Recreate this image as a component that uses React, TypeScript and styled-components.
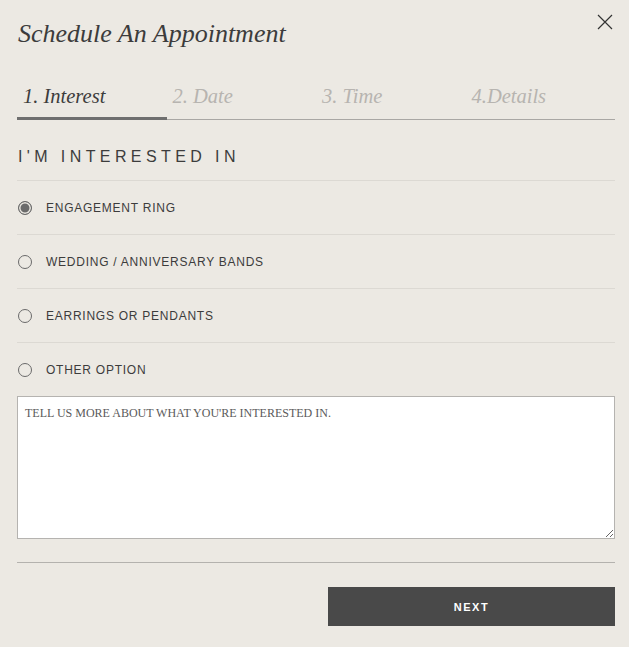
import React from "react";
import styled, { createGlobalStyle } from "styled-components";

const Global = createGlobalStyle`
  html, body { margin: 0; padding: 0; background: #ECE9E3; }
  * { box-sizing: border-box; }
`;

const Modal = styled.div`
  position: relative;
  width: 629px;
  height: 647px;
  background: #ECE9E3;
  padding: 0 14px 0 17px;
`;

const Title = styled.h1`
  margin: 0;
  padding-top: 17px;
  height: 76px;
  font-family: "Liberation Serif", serif;
  font-style: italic;
  font-weight: 400;
  font-size: 26px;
  line-height: 34px;
  color: #3c3c3c;
  padding-left: 1px;
`;

const Close = styled.button`
  position: absolute;
  top: 13px;
  right: 15px;
  width: 18px;
  height: 18px;
  padding: 0;
  border: 0;
  background: none;
  cursor: pointer;
`;

const Tabs = styled.div`
  display: flex;
  border-bottom: 1px solid #a9a7a4;
  height: 44px;
`;

const Tab = styled.div<{ $active?: boolean }>`
  width: 150px;
  padding: 0 0 0 6px;
  font-family: "Liberation Serif", serif;
  font-style: italic;
  font-size: 20.5px;
  line-height: 40px;
  color: ${(p) => (p.$active ? "#3c3c3c" : "#b7b4b0")};
  border-bottom: ${(p) => (p.$active ? "3px solid #6f6f6f" : "none")};
  margin-bottom: ${(p) => (p.$active ? "-1px" : "0")};
`;

const Heading = styled.h2`
  margin: 0;
  padding: 27px 0 0 1px;
  height: 61px;
  font-family: "Liberation Sans", sans-serif;
  font-weight: 400;
  font-size: 16px;
  letter-spacing: 4.4px;
  line-height: 20px;
  color: #3c3c3c;
  border-bottom: 1px solid #dcd9d3;
`;

const Option = styled.label<{ $last?: boolean }>`
  display: flex;
  align-items: center;
  gap: 14px;
  height: ${(p) => (p.$last ? "53px" : "54px")};
  border-bottom: ${(p) => (p.$last ? "none" : "1px solid #dcd9d3")};
  padding-left: 1px;
  cursor: pointer;
`;

const Radio = styled.span<{ $checked?: boolean }>`
  width: 14px;
  height: 14px;
  border-radius: 50%;
  border: 1px solid #6a6a6a;
  background: ${(p) => (p.$checked ? "#6b6b6b" : "transparent")};
  box-shadow: ${(p) => (p.$checked ? "inset 0 0 0 1.5px #ECE9E3" : "none")};
  flex: none;
`;

const OptionText = styled.span`
  font-family: "Liberation Sans", sans-serif;
  font-size: 12px;
  letter-spacing: 0.75px;
  color: #3c3c3c;
  text-transform: uppercase;
`;

const TextArea = styled.textarea`
  display: block;
  width: 100%;
  height: 143px;
  margin: 0;
  padding: 9px 7px;
  background: #fff;
  border: 1px solid #b5b3b0;
  border-radius: 0;
  font-family: "Liberation Serif", serif;
  font-size: 12px;
  color: #555;
  resize: vertical;
  outline: none;
  &::placeholder {
    color: #5a5a5a;
    opacity: 1;
  }
`;

const Divider = styled.hr`
  margin: 23px 0 0;
  border: 0;
  border-top: 1px solid #b4b2ae;
`;

const Footer = styled.div`
  display: flex;
  justify-content: flex-end;
  padding-top: 24px;
`;

const NextButton = styled.button`
  width: 287px;
  height: 39px;
  border: 0;
  background: #494949;
  color: #fff;
  font-family: "Liberation Sans", sans-serif;
  font-weight: 700;
  font-size: 11px;
  letter-spacing: 1.6px;
  cursor: pointer;
`;

const options = [
  "Engagement Ring",
  "Wedding / Anniversary Bands",
  "Earrings or Pendants",
  "Other Option",
];

export default function App() {
  return (
    <>
      <Global />
      <Modal>
        <Title>Schedule An Appointment</Title>
        <Close aria-label="Close">
          <svg width="18" height="18" viewBox="0 0 18 18">
            <path d="M2 2 L16 16 M16 2 L2 16" stroke="#333" strokeWidth="1.2" fill="none" />
          </svg>
        </Close>
        <Tabs>
          <Tab $active>1. Interest</Tab>
          <Tab>2. Date</Tab>
          <Tab>3. Time</Tab>
          <Tab>4.Details</Tab>
        </Tabs>
        <Heading>I'M INTERESTED IN</Heading>
        {options.map((o, i) => (
          <Option key={o} $last={i === options.length - 1}>
            <Radio $checked={i === 0} />
            <OptionText>{o}</OptionText>
          </Option>
        ))}
        <TextArea placeholder="TELL US MORE ABOUT WHAT YOU'RE INTERESTED IN." />
        <Divider />
        <Footer>
          <NextButton>NEXT</NextButton>
        </Footer>
      </Modal>
    </>
  );
}
